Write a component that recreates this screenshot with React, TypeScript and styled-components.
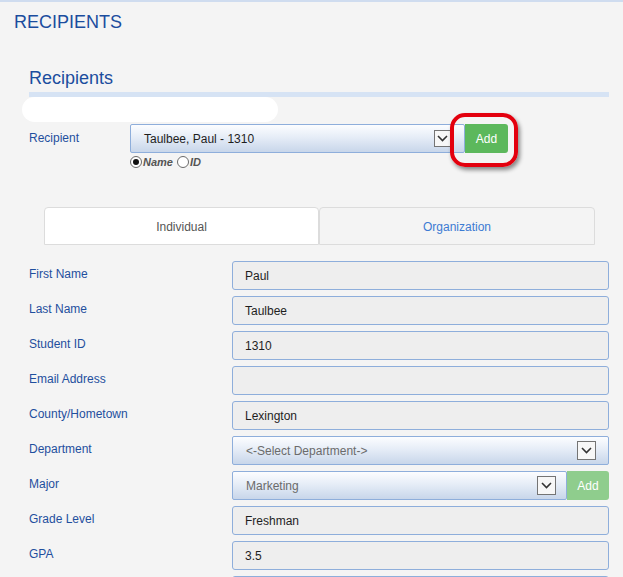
import React from "react";
import styled, { createGlobalStyle } from "styled-components";

const GlobalStyle = createGlobalStyle`
    html, body {
        margin: 0;
        padding: 0;
        background: #f4f4f4;
        font-family: "Liberation Sans", Arial, sans-serif;
    }
`;

const Page = styled.div`
    width: 623px;
    min-height: 577px;
    box-sizing: border-box;
    border-top: 2px solid #cfdcef;
    padding: 0 14px 0 14px;
    overflow: hidden;
`;

const PageTitle = styled.h1`
    margin: 10px 0 0 0;
    font-size: 18px;
    line-height: 21px;
    font-weight: normal;
    color: #1b4d9e;
`;

const Section = styled.section`
    margin-top: 35px;
    padding-left: 15px;
`;

const SectionTitle = styled.h2`
    margin: 0;
    font-size: 18px;
    line-height: 21px;
    font-weight: normal;
    color: #1b4d9e;
`;

const SectionRule = styled.div`
    height: 5px;
    margin-top: 3px;
    background: #d6e3f4;
`;

const Redacted = styled.div`
    width: 256px;
    height: 25px;
    margin-left: -7px;
    border-radius: 13px;
    background: #ffffff;
`;

const RecipientRow = styled.div`
    display: grid;
    grid-template-columns: 101px auto;
    margin-top: 2px;
`;

const Label = styled.div`
    padding-top: 7px;
    font-size: 12px;
    line-height: 14px;
    color: #1f4f9e;
`;

const PickerLine = styled.div`
    display: flex;
    align-items: stretch;
`;

const SelectBox = styled.div<{ $width: number; $muted?: boolean; $pad?: number }>`
    display: flex;
    align-items: center;
    justify-content: space-between;
    box-sizing: border-box;
    width: ${(p) => p.$width}px;
    height: 29px;
    padding: 0 ${(p) => p.$pad ?? 12}px 0 13px;
    border: 1px solid #8eaedb;
    border-radius: 2px;
    background: linear-gradient(to bottom, #fcfdff 0%, #e6edf7 45%, #c8d6ea 100%);
    font-size: 12px;
    color: ${(p) => (p.$muted ? "#6b6b6b" : "#1e1e1e")};
`;

const ArrowBox = styled.span<{ $size: number }>`
    display: flex;
    align-items: center;
    justify-content: center;
    box-sizing: border-box;
    width: ${(p) => p.$size}px;
    height: ${(p) => p.$size}px;
    border: 1px solid #747474;
    background: #f7f7f7;
`;

const AddWrap = styled.div`
    position: relative;
    display: flex;
`;

const AddButton = styled.button<{ $light?: boolean }>`
    width: ${(p) => (p.$light ? 42 : 43)}px;
    height: 29px;
    margin: 0;
    padding: 0;
    border: none;
    border-radius: 0 3px 3px 0;
    background: ${(p) => (p.$light ? "#8fcd8d" : "#5cb85c")};
    color: #ffffff;
    font-family: "Liberation Sans", Arial, sans-serif;
    font-size: 12px;
`;

const Highlight = styled.span`
    position: absolute;
    left: -15px;
    top: -11px;
    right: -10px;
    bottom: -14px;
    border: 4px solid #e3000e;
    border-radius: 15px;
    box-shadow: 2px 3px 4px rgba(0, 0, 0, 0.45);
    pointer-events: none;
`;

const RadioRow = styled.div`
    display: flex;
    align-items: center;
    height: 14px;
    margin-top: 2px;
    font-size: 11px;
    font-weight: bold;
    font-style: italic;
    color: #555555;
`;

const Radio = styled.span<{ $checked?: boolean }>`
    position: relative;
    display: inline-block;
    box-sizing: border-box;
    width: 12px;
    height: 12px;
    margin-right: 1px;
    border: 1px solid #6a6a6a;
    border-radius: 50%;
    background: #ffffff;

    &::after {
        content: "";
        display: ${(p) => (p.$checked ? "block" : "none")};
        position: absolute;
        left: 2px;
        top: 2px;
        width: 6px;
        height: 6px;
        border-radius: 50%;
        background: #111111;
    }
`;

const RadioText = styled.span`
    margin-right: 4px;
`;

const Tabs = styled.div`
    display: grid;
    grid-template-columns: 275px 276px;
    margin: 38px 0 0 15px;
`;

const Tab = styled.div<{ $active?: boolean }>`
    display: flex;
    align-items: center;
    justify-content: center;
    height: 38px;
    box-sizing: border-box;
    padding-top: 2px;
    border: 1px solid #dcdcdc;
    border-radius: 4px 4px 0 0;
    background: ${(p) => (p.$active ? "#ffffff" : "#f4f4f4")};
    color: ${(p) => (p.$active ? "#555555" : "#3c7bd3")};
    font-size: 12px;
`;

const Form = styled.div`
    display: flex;
    flex-direction: column;
    gap: 6px;
    margin-top: 16px;
`;

const FieldRow = styled.div`
    display: grid;
    grid-template-columns: 203px 377px;
`;

const FieldLabel = styled(Label)`
    padding-top: 6px;
`;

const TextBox = styled.div`
    display: flex;
    align-items: center;
    box-sizing: border-box;
    height: 29px;
    padding-left: 12px;
    border: 1px solid #8eaedb;
    border-radius: 3px;
    background: #eeeeee;
    font-size: 12px;
    color: #1e1e1e;
`;

const Chevron = () => (
    <svg width="11" height="7" viewBox="0 0 11 7">
        <polyline points="1,1 5.5,5.5 10,1" fill="none" stroke="#333" strokeWidth="1.6" />
    </svg>
);

const fields: { label: string; value: string }[] = [
    { label: "First Name", value: "Paul" },
    { label: "Last Name", value: "Taulbee" },
    { label: "Student ID", value: "1310" },
    { label: "Email Address", value: "" },
    { label: "County/Hometown", value: "Lexington" },
];

const App = () => (
    <>
        <GlobalStyle />
        <Page>
            <PageTitle>RECIPIENTS</PageTitle>
            <Section>
                <SectionTitle>Recipients</SectionTitle>
                <SectionRule />
                <Redacted />
                <RecipientRow>
                    <Label>Recipient</Label>
                    <div>
                        <PickerLine>
                            <SelectBox $width={335} $pad={13}>
                                Taulbee, Paul - 1310
                                <ArrowBox $size={17}>
                                    <Chevron />
                                </ArrowBox>
                            </SelectBox>
                            <AddWrap>
                                <AddButton>Add</AddButton>
                                <Highlight />
                            </AddWrap>
                        </PickerLine>
                        <RadioRow>
                            <Radio $checked />
                            <RadioText>Name</RadioText>
                            <Radio />
                            <RadioText>ID</RadioText>
                        </RadioRow>
                    </div>
                </RecipientRow>

                <Tabs>
                    <Tab $active>Individual</Tab>
                    <Tab>Organization</Tab>
                </Tabs>

                <Form>
                    {fields.map((f) => (
                        <FieldRow key={f.label}>
                            <FieldLabel>{f.label}</FieldLabel>
                            <TextBox>{f.value}</TextBox>
                        </FieldRow>
                    ))}
                    <FieldRow>
                        <FieldLabel>Department</FieldLabel>
                        <SelectBox $width={377} $muted $pad={12}>
                            &lt;-Select Department-&gt;
                            <ArrowBox $size={19}>
                                <Chevron />
                            </ArrowBox>
                        </SelectBox>
                    </FieldRow>
                    <FieldRow>
                        <FieldLabel>Major</FieldLabel>
                        <PickerLine>
                            <SelectBox $width={335} $muted $pad={10}>
                                Marketing
                                <ArrowBox $size={19}>
                                    <Chevron />
                                </ArrowBox>
                            </SelectBox>
                            <AddButton $light>Add</AddButton>
                        </PickerLine>
                    </FieldRow>
                    <FieldRow>
                        <FieldLabel>Grade Level</FieldLabel>
                        <TextBox>Freshman</TextBox>
                    </FieldRow>
                    <FieldRow>
                        <FieldLabel>GPA</FieldLabel>
                        <TextBox>3.5</TextBox>
                    </FieldRow>
                    <FieldRow>
                        <FieldLabel />
                        <TextBox />
                    </FieldRow>
                </Form>
            </Section>
        </Page>
    </>
);

export default App;
